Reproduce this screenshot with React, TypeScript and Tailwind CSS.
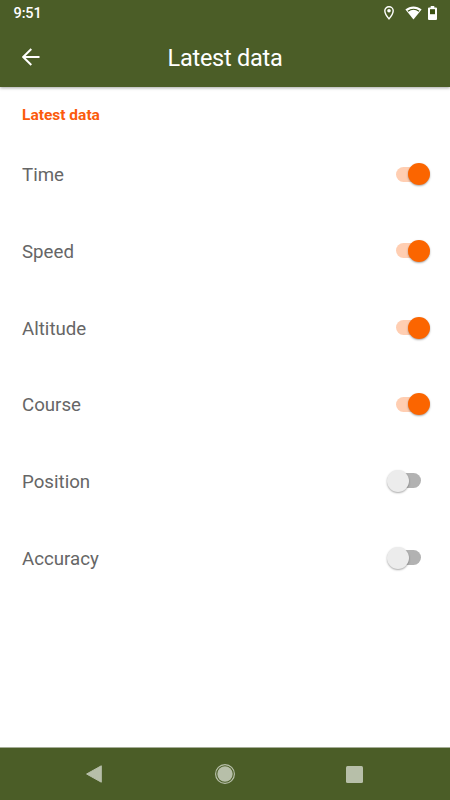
import React from "react";
import clsx from "clsx";

const initialSettings = [
  { name: "Time", enabled: true },
  { name: "Speed", enabled: true },
  { name: "Altitude", enabled: true },
  { name: "Course", enabled: true },
  { name: "Position", enabled: false },
  { name: "Accuracy", enabled: false },
];

const StatusBar: React.FC = () => (
  <div className="flex h-7 items-center justify-between pl-[13.5px] pr-[13px] text-white">
    <span className="pt-px text-[14.5px] font-medium leading-none tracking-[-0.1px]">
      9:51
    </span>
    <div className="flex h-full items-center pb-[2px]">
      <svg className="h-[14px] w-[10px]" viewBox="0 0 10 14">
        <path
          d="M5 .7C2.6.7.8 2.5.8 4.8.8 8 5 12.9 5 12.9S9.2 8 9.2 4.8C9.2 2.5 7.4.7 5 .7Z"
          fill="none"
          stroke="currentColor"
          strokeWidth="1.4"
        />
        <circle cx="5" cy="4.8" r="1.8" fill="currentColor" />
      </svg>
      <svg className="ml-[11px] h-[14px] w-[17px]" viewBox="0 0 17 14">
        <path
          d="M.4 3.5C5-.4 12-.4 16.6 3.5L8.5 13.5Z"
          fill="currentColor"
        />
        <path
          d="M2.9 5.2C6.2 2.8 10.8 2.8 14.1 5.2"
          fill="none"
          stroke="#3c5214"
          strokeWidth="1.3"
        />
      </svg>
      <svg className="ml-[6px] h-[14px] w-[9px]" viewBox="0 0 9 14">
        <path
          d="M2.7 0h3.6v1.4H8a1 1 0 0 1 1 1V13a1 1 0 0 1-1 1H1a1 1 0 0 1-1-1V2.4a1 1 0 0 1 1-1h1.7Z"
          fill="currentColor"
        />
        <path d="M2 3.2h5v5H2Z" fill="#3c5214" />
      </svg>
    </div>
  </div>
);

const AppBar: React.FC<{ title: string }> = ({ title }) => (
  <div className="grid h-[59px] grid-cols-[64px_1fr_64px] items-center">
    <button aria-label="Back" className="flex justify-start pb-px pl-[22px]">
      <svg className="h-[18px] w-[18px]" viewBox="0 0 18 18">
        <path
          d="M17.5 9H1.2M9.3 1L1.2 9L9.3 17"
          fill="none"
          stroke="white"
          strokeWidth="2"
        />
      </svg>
    </button>
    <h1 className="pt-[2px] text-center text-[23.5px] leading-none tracking-[-0.25px] text-white">
      {title}
    </h1>
  </div>
);

const Toggle: React.FC<{
  label: string;
  checked: boolean;
  onChange: () => void;
}> = ({ label, checked, onChange }) => (
  <button
    role="switch"
    aria-checked={checked}
    aria-label={label}
    onClick={onChange}
    className="grid h-[23px] w-[44px] items-center"
  >
    <span
      className={clsx(
        "col-start-1 row-start-1 ml-[9px] h-[15px] w-[25px] rounded-full",
        checked ? "bg-[#ffceb2]" : "bg-[#b2b2b2]"
      )}
    />
    <span
      className={clsx(
        "col-start-1 row-start-1 h-[22px] w-[22px] rounded-full shadow-[0_1px_2px_rgba(0,0,0,0.35)]",
        checked ? "ml-[21px] bg-[#fb6500]" : "ml-0 bg-[#ececec]"
      )}
    />
  </button>
);

const NavigationBar: React.FC = () => (
  <nav className="grid h-[53px] grid-cols-[188px_74px_188px] items-center border-t border-[#a5ad97] bg-[#4b5d27] text-[#b7bfa9]">
    <svg className="h-[20px] w-full" viewBox="0 0 188 20">
      <path
        d="M101.3 1.8V18.2L86.6 10Z"
        fill="currentColor"
        stroke="currentColor"
        strokeWidth="1"
        strokeLinejoin="round"
      />
    </svg>
    <svg className="h-[22px] w-full" viewBox="0 0 74 22">
      <circle
        cx="37"
        cy="11"
        r="9.4"
        fill="none"
        stroke="currentColor"
        strokeWidth="1.2"
      />
      <circle cx="37" cy="11" r="7.7" fill="currentColor" />
    </svg>
    <div className="ml-[84px] h-[17px] w-[17px] rounded-[1.5px] bg-[#b7bfa9]" />
  </nav>
);

const App: React.FC = () => {
  const [settings, setSettings] = React.useState(initialSettings);

  const toggle = (name: string) =>
    setSettings((prev) =>
      prev.map((s) => (s.name === name ? { ...s, enabled: !s.enabled } : s))
    );

  return (
    <div className="flex h-[800px] w-[450px] flex-col overflow-hidden bg-white font-['Roboto',sans-serif]">
      <header className="bg-[#4b5d27] shadow-[0_1px_3px_rgba(0,0,0,0.35)]">
        <StatusBar />
        <AppBar title="Latest data" />
      </header>

      <main className="flex-1">
        <h2 className="flex h-[49px] items-center pl-[22px] pt-[9px] text-[15.5px] font-bold leading-none text-[#fb5b0c]">
          Latest data
        </h2>
        {settings.map((s) => (
          <div
            key={s.name}
            className="flex h-[76.66px] items-center justify-between pl-[22px] pr-[19px]"
          >
            <span className="pt-[2.6px] text-[18.7px] leading-none text-[#666666]">
              {s.name}
            </span>
            <Toggle
              label={s.name}
              checked={s.enabled}
              onChange={() => toggle(s.name)}
            />
          </div>
        ))}
      </main>

      <NavigationBar />
    </div>
  );
};

export default App;
